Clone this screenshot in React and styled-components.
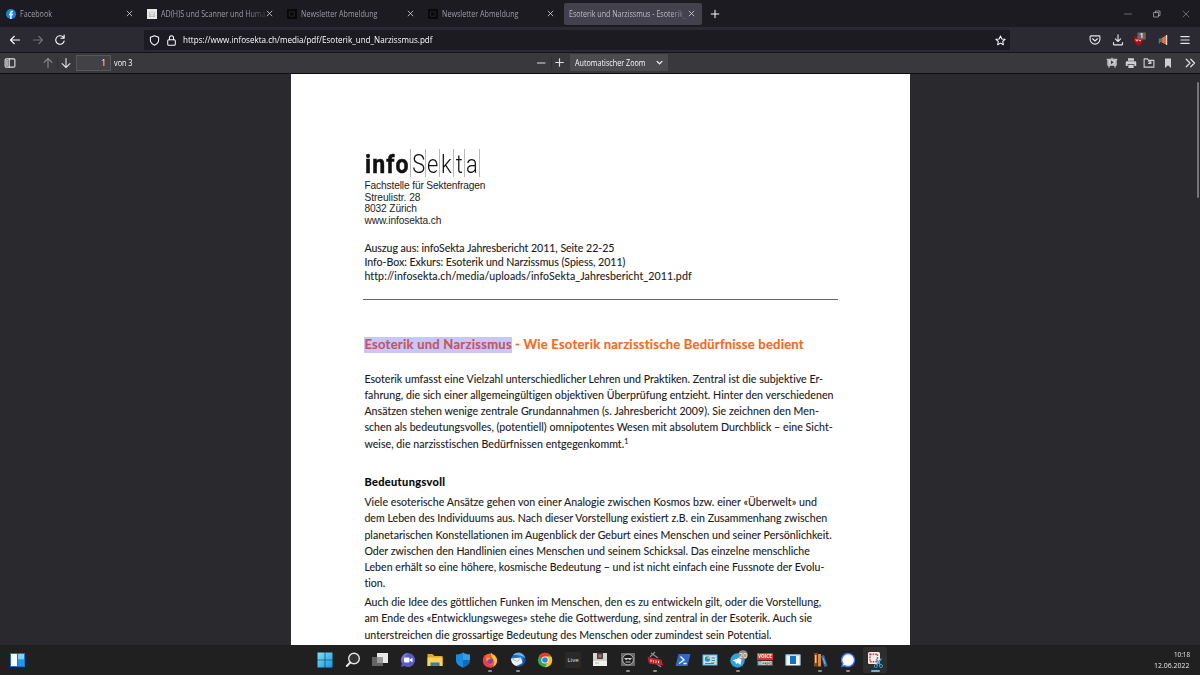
import React, { useLayoutEffect, useRef, useState } from "react";
import styled, { createGlobalStyle, css } from "styled-components";

const Global = createGlobalStyle`
  * { box-sizing: border-box; }
  html, body { margin: 0; padding: 0; overflow: hidden; background: #2a2a2e; }
`;

const ui = `"Open Sans", "Noto Sans", sans-serif`;

/* Text run that takes exactly the given width, as a PDF text layer does:
   tracked by default, or with its glyphs condensed. */
const Run = styled.span`
  display: inline-block;
  white-space: nowrap;
  transform-origin: 0 50%;
`;

function Fit({ w, condense, children }) {
  const ref = useRef(null);
  const [style, setStyle] = useState({});
  useLayoutEffect(() => {
    const natural = ref.current.getBoundingClientRect().width;
    setStyle(
      condense
        ? { transform: `scaleX(${w / natural})`, marginRight: `${w - natural}px` }
        : { letterSpacing: `${(w - natural) / String(children).length}px` }
    );
  }, []);
  return (
    <Run ref={ref} style={style}>
      {children}
    </Run>
  );
}

const Screen = styled.div`
  width: 1200px;
  height: 675px;
  display: flex;
  flex-direction: column;
  overflow: hidden;
  font-family: ${ui};
  color: #fbfbfe;
`;

/* ---------- browser chrome ---------- */

const TabBar = styled.div`
  flex: none;
  height: 27px;
  display: flex;
  align-items: center;
  background: #1c1b22;
`;

const Tab = styled.div`
  width: ${(p) => (p.$active ? 138 : 140.6)}px;
  height: 22px;
  margin-left: ${(p) => (p.$active ? 1.3 : 0)}px;
  padding: 0 ${(p) => (p.$active ? 7 : 8)}px 0 ${(p) => (p.$active ? 5 : 6)}px;
  display: flex;
  align-items: center;
  gap: 1px;
  border-radius: 2px;
  background: ${(p) => (p.$active ? "#42414d" : "transparent")};
  color: ${(p) => (p.$active ? "#bdbcc4" : "#9d9ca3")};
  font-size: 8.3px;
  line-height: 12px;
  svg {
    flex: none;
  }
`;

const TabTitle = styled.div`
  flex: 1;
  min-width: 0;
  padding-left: ${(p) => (p.$flush ? 0 : 3.3)}px;
  white-space: nowrap;
  ${(p) =>
    p.$fade &&
    css`
      mask-image: linear-gradient(to right, #000 calc(100% - 18px), rgba(0, 0, 0, 0.2));
    `}
`;

const NewTab = styled.div`
  margin-left: 8px;
  display: flex;
`;

const WindowButtons = styled.div`
  margin-left: auto;
  padding-right: 10px;
  display: flex;
  gap: 21px;
`;

const NavBar = styled.div`
  flex: none;
  height: 26px;
  display: flex;
  align-items: center;
  background: #2b2a33;
  border-bottom: 1px solid #131318;
`;

const NavButtons = styled.div`
  width: 144px;
  padding-left: 9px;
  display: flex;
  gap: 10.5px;
`;

const UrlBar = styled.div`
  width: 866px;
  height: 20px;
  padding: 1px 4px 0 5px;
  display: flex;
  align-items: center;
  gap: 6px;
  border-radius: 2px;
  background: #1c1b22;
  font-size: 8.8px;
  line-height: 14px;
`;

const Push = styled.div`
  margin-left: auto;
  display: flex;
`;

const Extensions = styled.div`
  margin-left: auto;
  padding-right: 9px;
  display: flex;
  align-items: center;
  gap: 10.5px;
`;

const PdfBar = styled.div`
  flex: none;
  height: 20.5px;
  display: flex;
  align-items: center;
  background: #38383d;
  border-bottom: 1px solid #0c0c0d;
  font-size: 8.1px;
`;

const PdfLeft = styled.div`
  width: 534px;
  padding-left: 4px;
  display: flex;
  align-items: center;
`;

const Spacer = styled.div`
  width: ${(p) => p.$w}px;
`;

const Separator = styled.div`
  width: 1px;
  height: 12px;
  margin: 0 2.5px;
  background: #2f2f34;
`;

const PageInput = styled.div`
  width: 35px;
  height: 16px;
  margin: 0 3px 0 4px;
  padding-right: 4px;
  border: 1px solid #56565c;
  background: #414146;
  text-align: right;
  line-height: 14px;
`;

const ZoomSelect = styled.div`
  width: 98px;
  height: 17px;
  margin-left: 5px;
  padding: 0 5px;
  display: flex;
  align-items: center;
  justify-content: space-between;
  background: #4a4a4f;
`;

const PdfRight = styled.div`
  margin-left: auto;
  padding-right: 4px;
  display: flex;
  align-items: center;
  gap: 6.7px;
`;

const Bookmark = styled.div`
  display: flex;
  margin-right: 3.3px;
`;

/* ---------- document ---------- */

const Viewer = styled.div`
  flex: 1;
  min-height: 0;
  display: flex;
  overflow: hidden;
  background: #2a2a2e;
`;

const Page = styled.div`
  flex: none;
  width: 619.5px;
  margin-left: 290.5px;
  padding: 75.5px 0 0 73.9px;
  background: #fff;
  color: #1a1a1a;
  font-family: Lato, "Open Sans", sans-serif;
`;

const ScrollTrack = styled.div`
  margin-left: auto;
  padding: 8px 1px 0 0;
`;

const ScrollThumb = styled.div`
  width: 2px;
  height: 116px;
  border-radius: 1px;
  background: #75757a;
`;

const Logo = styled.div`
  height: 28px;
  display: flex;
  font-family: Roboto, sans-serif;
  font-size: 26px;
  line-height: 31px;
  color: #111;
`;

const LogoBold = styled.div`
  width: 45.8px;
  padding-left: 0.5px;
  font-weight: 700;
  letter-spacing: 1.2px;
  -webkit-text-stroke: 0.5px #111;
`;

const LogoCell = styled.div`
  width: ${(p) => p.$w}px;
  display: flex;
  justify-content: center;
  border-left: 1px solid #b9b9b9;
  font-weight: 300;
  span {
    transform: scaleX(0.84);
  }
`;

const Address = styled.div`
  margin-top: 3.4px;
  font-family: "Liberation Sans", Arial, sans-serif;
  font-size: 10.2px;
  line-height: 11.5px;
  color: #222;
`;

const Lines = styled.div`
  margin-top: ${(p) => p.$top || 0}px;
  font-size: 10.6px;
  line-height: ${(p) => p.$lh || 16.1}px;
  -webkit-text-stroke: 0.1px #1a1a1a;
`;

const Line = styled.div`
  height: 1lh;
  white-space: nowrap;
`;

const Rule = styled.div`
  width: 475px;
  height: 1px;
  margin: 15.4px 0 0 -1.4px;
  background: #666;
`;

const Title = styled.div`
  margin-top: 36.7px;
  display: flex;
  gap: 3.2px;
  font-size: 13px;
  font-weight: 700;
  line-height: 16px;
  color: #f26a1b;
  -webkit-text-stroke: 0.15px currentColor;
  > span > span, > span:last-child {
    position: relative;
    top: -0.7px;
  }
`;

const Selected = styled.span`
  background: #c9c6fb;
  color: #c0585c;
`;

const Heading = styled.div`
  margin-top: 22.5px;
  font-size: 11px;
  font-weight: 700;
  line-height: 16px;
  color: #000;
  -webkit-text-stroke: 0.15px #000;
`;

const Note = styled.sup`
  font-size: 7px;
  line-height: 0;
  vertical-align: 4px;
`;

/* ---------- taskbar ---------- */

const Taskbar = styled.div`
  flex: none;
  height: 30px;
  display: grid;
  grid-template-columns: 311.5px 577.5px 311px;
  align-items: center;
  background: #202020;
`;

const Widgets = styled.div`
  padding-left: 10px;
  display: flex;
`;

const Apps = styled.div`
  display: flex;
`;

const AppCell = styled.div`
  width: ${(p) => (p.$active ? 24 : 27.5)}px;
  height: 26px;
  margin-left: ${(p) => (p.$active ? 1.75 : 0)}px;
  padding-top: 5px;
  display: flex;
  flex-direction: column;
  align-items: center;
  gap: 2px;
  border-radius: 2px;
  background: ${(p) => (p.$active ? "#2e2e2e" : "transparent")};
  svg {
    overflow: visible;
  }
`;

const Indicator = styled.div`
  width: ${(p) => (p.$active ? 9 : 4)}px;
  height: 2px;
  border-radius: 1px;
  background: ${(p) => (p.$active ? "#5cb8ea" : "#8f8f8f")};
`;

const Clock = styled.div`
  padding: 0 10.5px 1px 0;
  display: flex;
  flex-direction: column;
  align-items: flex-end;
  font-size: 7.3px;
  line-height: 10.3px;
  color: #e8e8e8;
`;

/* ---------- icons ---------- */

const Svg = ({ s = 12, v = 16, children, c = "#fbfbfe", sw = 1.5 }) => (
  <svg width={s} height={s} viewBox={`0 0 ${v} ${v}`} fill="none" stroke={c} strokeWidth={sw}
    strokeLinecap="round" strokeLinejoin="round">
    {children}
  </svg>
);

const Close = () => <Svg s={7} c="#d8d8dc" sw={1.8}><path d="M2.500 2.500l11 11M13.500 2.500l-11 11" /></Svg>;

const Favicon = ({ kind }) => {
  if (kind === "fb")
    return (
      <Svg s={10} c="none">
        <circle cx="8" cy="8" r="8" fill="#1684ee" />
        <path fill="#fff" d="M6.700 16V10H4.800V7.600h1.900V6.100c0-2.300 1.100-3.200 2.900-3.200l1.500.1v2h-1c-1 0-1.200.5-1.200 1.300v1.300h2.200L10.700 10H8.900v6z" />
      </Svg>
    );
  if (kind === "crest")
    return (
      <Svg s={10} c="#aaa" sw={1}>
        <path fill="#e9e9e9" stroke="none" d="M0 0h16v16H0z" />
        <path d="M4 12V6l2-2 2 2 2-2 2 2v6M6 8v4M10 8v4M4 12h8" />
      </Svg>
    );
  return (
    <Svg s={10} c="#34333a" sw={1}>
      <path fill="#09090b" stroke="none" d="M0 0h16v16H0z" />
      <path d="M4.500 4.500h7v7h-7z" />
    </Svg>
  );
};

const Tile = ({ children }) => (
  <svg width="16" height="16" viewBox="0 0 16 16">{children}</svg>
);

const glyph = { fontFamily: '"Open Sans", sans-serif', textAnchor: "middle" };

const apps = [
  { art: <><defs><linearGradient id="w" x2="1" y2="1"><stop stopColor="#7de0fb" /><stop offset="1" stopColor="#1197e6" /></linearGradient></defs>
    <path fill="url(#w)" d="M.5.5h7.200v7.200H.5zM8.300.5h7.200v7.200H8.300zM.5 8.300h7.200v7.200H.5zM8.300 8.300h7.200v7.200H8.300z" /></> },
  { art: <g fill="none" stroke="#e6e6e6"><circle cx="9" cy="6.500" r="5.300" strokeWidth="1.400" fill="#333" /><path d="M5.200 10.500L1.800 14" strokeWidth="2" strokeLinecap="round" /></g> },
  { art: <><path fill="#e8e8e8" d="M5 1h11v10H5z" /><path fill="#6b6b6b" d="M0 5h11v9H0z" opacity=".9" /><path fill="#9a9a9a" d="M5 5h6v6H5z" /></> },
  { art: <><path fill="#5b5bc8" d="M8 1a7 7 0 1 1-3.500 13L1 15l.8-3.500A7 7 0 0 1 8 1z" /><path fill="#8a84de" d="M8 1a7 7 0 0 0-6 10z" opacity=".6" /><rect x="4" y="5.500" width="5.500" height="5" rx="1" fill="#fff" /><path fill="#fff" d="M10 7.500l2.500-1.700v4.500L10 8.800z" /></> },
  { art: <><path fill="#e5a51e" d="M.5 2h5l2 2h8v10H.5z" /><path fill="#fdd25a" d="M.5 5.500h15V14H.5z" /><path fill="#1d7fd0" d="M3.500 10.500h9V14h-9z" /><path fill="#9a7b25" d="M6 12.500h4V14H6z" /></> },
  { art: <><path fill="#1b8be0" d="M8 .5c2 1.500 4.500 2 7 2V8c0 4-3 6-7 7.500C4 14 1 12 1 8V2.500c2.500 0 5-.5 7-2z" /><path fill="#0b5ea8" d="M8 8h7c0 4-3 6-7 7.500z" opacity=".7" /><path fill="#51b4f2" d="M8 .5c2 1.500 4.500 2 7 2V8H8z" opacity=".45" /></> },
  { run: 1, art: <><circle cx="8" cy="8.500" r="7" fill="#ff5a2a" /><path fill="#ffc62b" d="M9 .5c1 2 5.500 3 6 7.500.3 4-3 7.500-7 7.500 3-1 5-3.500 4-6.500C11.500 6 8 5 9 .5z" /><path fill="#f0374f" d="M1 7c-1 5 3 8.500 7 8.500 2 0 3.500-1 4.500-2C8 14 4 12 3.500 7L3 3C2 4 1.300 5.500 1 7z" /><circle cx="8" cy="8.800" r="2.900" fill="#7a3ed0" /><path fill="#ffa02b" d="M4 6c2-1 4-.5 5 1-2-.3-3 .5-3 2-1.500-.5-2-1.500-2-3z" /></> },
  { run: 1, art: <><circle cx="8.500" cy="7.500" r="7" fill="#1f6fc4" /><path fill="#67b3ee" d="M3 3c4-4 11-2 12 3-3-2.500-7-3-12-3z" /><path fill="#eef1f6" d="M1 6.500l10-1 1.500 5.500-6 3C3 13 1 10 1 6.500z" /><path fill="none" stroke="#9aa9bd" strokeWidth=".8" d="M1.500 6.800l6 2.700 3.500-4" /><path fill="#164b95" d="M13 5c2 4 0 8-5 9.500 5 0 8-4 7.200-8z" /></> },
  { art: <><circle cx="8" cy="8" r="7.200" fill="#2fa84f" /><path fill="#e23c2e" d="M8 8L1.800 4.300A7.200 7.200 0 0 1 14.300 4.500H8z" /><path fill="#fbc21c" d="M14.300 4.500A7.200 7.200 0 0 1 8 15.200L11 9.500 8 4.500z" /><circle cx="8" cy="8" r="3.600" fill="#fff" /><circle cx="8" cy="8" r="2.800" fill="#3b7de8" /></> },
  { art: <><path fill="#292929" d="M0 0h16v16H0z" /><text x="8" y="10.200" fontSize="6" fill="#e0e0e0" {...glyph}>Live</text></> },
  { art: <><path fill="#d7d5d0" d="M1 1h14v13H1z" /><path fill="#f2f0ec" d="M1 7.500h14V14H1z" /><path fill="#444" d="M5 1h6v6H5z" /><path fill="#b86b62" d="M6.500 2.500h3v3h-3z" /><path stroke="#aaaaa6" strokeWidth=".8" d="M1 8h14M3 11h4" /></> },
  { run: 1, art: <><path fill="#6a6a6a" d="M1 1h14v13H1z" /><circle cx="8" cy="7.500" r="5.400" fill="#1b1b1b" stroke="#b4b4b4" /><path fill="none" stroke="#ccc" strokeWidth="1" d="M4.500 6.500h7M5 6.500c0 1.500 2.500 1.500 2.500 0M8.500 6.500c0 1.500 2.500 1.500 2.500 0M5.500 10h5" /></> },
  { run: 1, art: <><path fill="none" stroke="#8d8d8d" strokeWidth="1.200" d="M4 1l7 5M8 0L3 5M10 12l4 3" /><path fill="#c9202a" d="M.5 5l14 2.700 1.500 5.800L2 11.500z" /><path stroke="#fff" strokeWidth=".9" d="M4 7.500v2.500M6.500 8v2.500M9 8.300v2.500M11.500 8.700v2.500" /></> },
  { art: <><path fill="#2f69c8" d="M3.500 2H15.500L12.500 14H.5z" /><path fill="none" stroke="#fff" strokeWidth="1.300" d="M5.500 4.500L9 8l-5 3.500M8.500 11.500h3" /></> },
  { art: <><path fill="#5ab9e8" d="M.5 2.500h15v11H.5z" /><path fill="#bfe6f8" d="M1.500 3.500h13v9h-13z" /><circle cx="5.500" cy="7" r="2.700" fill="#2b8ccc" /><path fill="#f2b233" d="M5.500 7V4.300A2.700 2.700 0 0 1 8.200 7z" /><path stroke="#2b8ccc" d="M9.500 6H13M9.500 8.500H13M3 11.500h9" /><path stroke="#e8a030" d="M9 10.500h4" /></> },
  { run: 1, art: <><circle cx="7.500" cy="8.500" r="7.200" fill="#2ba3dc" /><path fill="#fff" d="M2.500 8.500L12 4.800 10.500 13 7.500 10.800 6 12.200 5.500 9.800z" /><circle cx="13" cy="3" r="4.800" fill="#8c8c8c" /><text x="13" y="5.600" fontSize="7" fill="#fff" {...glyph}>20</text></> },
  { art: <><path fill="#d9302c" d="M0 1h16v7H0z" /><path fill="#4c5157" d="M0 8.600h16V14H0z" /><text x="8" y="6.300" fontSize="4.700" fontWeight="700" fill="#fff" {...glyph}>VOICE</text><text x="8" y="13" fontSize="4.300" fontWeight="700" fill="#e6e6e6" textLength="14" {...glyph}>MEETER</text></> },
  { art: <><path fill="#f4f6f8" d="M.5 2.500h15v11H.5z" /><path fill="#2b9be0" d="M.5 2.500h1.200v11H.5zM14.300 2.500h1.200v11h-1.200z" opacity=".35" /><path fill="#1172c9" d="M5 4h6v8H5z" /><path stroke="#8bb9dc" d="M1 3h14" /></> },
  { run: 1, art: <><path fill="#8b4a22" d="M2 1h3.500v13.500H2z" /><path fill="#d68b3a" d="M6 2h3v12.500H6z" /><path fill="#e9c58a" d="M3 3h1.500v8H3z" /><path fill="#3b6fb0" d="M9 4l3-1 3.500 11-3 1z" /><path fill="#85b0dd" d="M10.500 6l1-.3 2 6.300-1 .3z" /></> },
  { run: 1, art: <><path fill="#3a76f0" d="M8 .7a7.300 7.300 0 1 1-3.500 13.700L1 15.300l.9-3.600A7.300 7.300 0 0 1 8 .7z" /><path fill="#fff" d="M8 2.200a5.800 5.800 0 1 1-3 10.700l-2 .6.6-2A5.800 5.800 0 0 1 8 2.200z" /></> },
  { run: 1, active: 1, art: <><rect x="1" y="0" width="12" height="12" rx="1.500" fill="#f3f0ee" /><rect x="3" y="2.200" width="7.500" height="7.500" fill="none" stroke="#cf3a32" strokeWidth="1.400" strokeDasharray="1.600 1" /><path fill="none" stroke="#3ba5df" strokeWidth="1.300" d="M9 7l4.500 6M14.500 6.500L9.500 13" /><circle cx="8.800" cy="14" r="1.500" fill="#202020" stroke="#3ba5df" /><circle cx="14" cy="14" r="1.500" fill="#202020" stroke="#3ba5df" /></> },
];

const tabs = [
  { icon: "fb", text: "Facebook", w: 32 },
  { icon: "crest", text: "AD(H)S und Scanner und Huma", w: 104.5, fade: true },
  { icon: "dark", text: "Newsletter Abmeldung", w: 76.5 },
  { icon: "dark", text: "Newsletter Abmeldung", w: 76.5 },
];

const intro = [
  ["Esoterik umfasst eine Vielzahl unterschiedlicher Lehren und Praktiken. Zentral ist die subjektive Er-", 459],
  ["fahrung, die sich einer allgemeingültigen objektiven Überprüfung entzieht. Hinter den verschiedenen", 469.5],
  ["Ansätzen stehen wenige zentrale Grundannahmen (s. Jahresbericht 2009). Sie zeichnen den Men-", 454.5],
  ["schen als bedeutungsvolles, (potentiell) omnipotentes Wesen mit absolutem Durchblick – eine Sicht-", 468.5],
  ["weise, die narzisstischen Bedürfnissen entgegenkommt.", 260, "1"],
];
const meaning = [
  ["Viele esoterische Ansätze gehen von einer Analogie zwischen Kosmos bzw. einer «Überwelt» und", 452.5],
  ["dem Leben des Individuums aus. Nach dieser Vorstellung existiert z.B. ein Zusammenhang zwischen", 463],
  ["planetarischen Konstellationen im Augenblick der Geburt eines Menschen und seiner Persönlichkeit.", 467.5],
  ["Oder zwischen den Handlinien eines Menschen und seinem Schicksal. Das einzelne menschliche", 445.5],
  ["Leben erhält so eine höhere, kosmische Bedeutung – und ist nicht einfach eine Fussnote der Evolu-", 460],
  ["tion.", 21],
];
const divine = [
  ["Auch die Idee des göttlichen Funken im Menschen, den es zu entwickeln gilt, oder die Vorstellung,", 456.5],
  ["am Ende des «Entwicklungsweges» stehe die Gottwerdung, sind zentral in der Esoterik. Auch sie", 447.5],
  ["unterstreichen die grossartige Bedeutung des Menschen oder zumindest sein Potential.", 407.5],
];
const source = [
  ["Auszug aus: infoSekta Jahresbericht 2011, Seite 22-25", 250],
  ["Info-Box: Exkurs: Esoterik und Narzissmus (Spiess, 2011)", 261],
  ["http://infosekta.ch/media/uploads/infoSekta_Jahresbericht_2011.pdf", 327],
];
const address = [
  ["Fachstelle für Sektenfragen", 121],
  ["Streulistr. 28", 56],
  ["8032 Zürich", 52.5],
  ["www.infosekta.ch", 77],
];

const Block = ({ rows }) =>
  rows.map(([text, w, note]) => (
    <Line key={text}>
      <Fit w={w}>{text}</Fit>
      {note && <Note>{note}</Note>}
    </Line>
  ));

export default function App() {
  return (
    <Screen>
      <Global />
      <TabBar>
        {tabs.map((t, i) => (
          <Tab key={i}>
            <Favicon kind={t.icon} />
            <TabTitle $fade={t.fade}><Fit condense w={t.w}>{t.text}</Fit></TabTitle>
            <Close />
          </Tab>
        ))}
        <Tab $active>
          <TabTitle $fade $flush><Fit condense w={117}>Esoterik und Narzissmus - Esoterik_</Fit></TabTitle>
          <Close />
        </Tab>
        <NewTab><Svg s={10} sw={1.6}><path d="M8 2v12M2 8h12" /></Svg></NewTab>
        <WindowButtons>
          <Svg s={8} c="#88878d" sw={1.400}><path d="M1 8h14" /></Svg>
          <Svg s={8} c="#a5a4aa" sw={1.600}><path d="M2 5h9v9H2zM5 5V2h9v9h-3" /></Svg>
          <Svg s={8} c="#88878d" sw={1.400}><path d="M2 2l12 12M14 2L2 14" /></Svg>
        </WindowButtons>
      </TabBar>

      <NavBar>
        <NavButtons>
          <Svg><path d="M14 8H2.500M7 3L2 8l5 5" /></Svg>
          <Svg c="#716f7a"><path d="M2 8h11.500M9 3l5 5-5 5" /></Svg>
          <Svg><path d="M13.500 9.500A5.700 5.700 0 1 1 12.500 4.500M13.500 1.500v4.200H9.300" /></Svg>
        </NavButtons>
        <UrlBar>
          <Svg s={11}><path d="M8 1.200l6 2.200v3.800c0 3.500-2.500 6-6 7.600-3.500-1.600-6-4.100-6-7.600V3.400z" /></Svg>
          <Svg s={11}><rect x="2.500" y="7" width="11" height="7.800" rx="1.500" /><path d="M5 7V4.200a3 3 0 0 1 6 0V7" /></Svg>
          <Fit condense w={249.500}>https://www.infosekta.ch/media/pdf/Esoterik_und_Narzissmus.pdf</Fit>
          <Push><Svg s={11}><path d="M8 1.300l2 4.400 4.700.5-3.500 3.200 1 4.800L8 11.800l-4.200 2.400 1-4.800L1.300 6.200 6 5.700z" /></Svg></Push>
        </UrlBar>
        <Extensions>
          <Svg s={12} c="#e4e4e8"><path d="M2.500 2.500h11a1 1 0 0 1 1 1V7a6.500 6.500 0 0 1-13 0V3.500a1 1 0 0 1 1-1zM4.800 6.300L8 9.300l3.200-3" /></Svg>
          <Svg s={12} c="#e4e4e8"><path d="M8 1v8.500M4.500 6.500L8 10l3.500-3.500M2 11.500v2a1 1 0 0 0 1 1h10a1 1 0 0 0 1-1v-2" /></Svg>
          <svg width="12" height="16" viewBox="0 0 12 16">
            <path fill="#a50d14" d="M4.500 3.500L9 5v3.500c0 2.500-2 4-4.500 5.200C2 12.500 0 11 0 8.500V5z" />
            <path fill="none" stroke="#f2dada" strokeWidth=".9" d="M2 7v1.500q1 1.200 2 0V7m1 1.500q1.500 1.200 2-.8" />
            <path fill="#67676d" d="M3.500.5h8.200v7H3.500z" />
            <text x="7.600" y="6.400" fontSize="6.500" fontWeight="600" fill="#fff" {...glyph}>1</text>
          </svg>
          <svg width="12" height="12" viewBox="0 0 12 12">
            <path fill="#ed6c3a" d="M4.500 4L9 1.500v9L4.500 8.500z" />
            <path fill="#f1d9cf" d="M9 1h1.200v10H9z" />
            <path fill="#3e7fa3" d="M1.800 4.500h2.700V8H3v1.500H1.800z" />
          </svg>
          <Svg s={12} c="#e4e4e8"><path d="M2.500 3.500h11M2.500 8h11M2.500 12.500h11" /></Svg>
        </Extensions>
      </NavBar>

      <PdfBar>
        <PdfLeft>
          <Svg s={12} c="#dedee2"><rect x="1.500" y="2.500" width="13" height="11" rx="1.500" /><path d="M7 2.500v11" /><path fill="#aaa" stroke="none" d="M2.500 4h3.500v8H2.500z" /></Svg>
          <Spacer $w={26} />
          <Svg s={12} c="#8a8a8e"><path d="M8 14V2.200M2.800 7.200L8 2l5.200 5.200" /></Svg>
          <Separator />
          <Svg s={12} c="#dedee2"><path d="M8 2v11.800M2.800 8.800L8 14l5.200-5.200" /></Svg>
          <PageInput>1</PageInput>
          <Fit condense w={18.500}>von 3</Fit>
        </PdfLeft>
        <Svg s={14} c="#dedee2" sw={1.400}><path d="M4 8h8.500" /></Svg>
        <Separator />
        <Svg s={11} c="#dedee2" sw={1.700}><path d="M8 2.500v11M2.500 8h11" /></Svg>
        <ZoomSelect>
          <Fit condense w={70.500}>Automatischer Zoom</Fit>
          <Svg s={7} sw={2.800}><path d="M2.500 5.500L8 11l5.500-5.500" /></Svg>
        </ZoomSelect>
        <PdfRight>
          <Svg s={12} c="#cfcfd3"><path d="M1.500 3h13M2.500 3v8h11V3M4 13.500v-2M12 13.500v-2M8 1.500V3" /><path fill="#cfcfd3" stroke="none" d="M3 3.500h10v7H3z" /><path fill="#38383d" stroke="none" d="M6.500 4.500L10.500 7l-4 2.500z" /></Svg>
          <Svg s={12} c="none"><path fill="#cfcfd3" d="M4 1.500h8V5H4zM2.500 5.500h11A1.500 1.500 0 0 1 15 7v5h-2.500V9.500h-9V12H1V7a1.500 1.500 0 0 1 1.500-1.500zM4.500 10.500h7v4h-7z" /></Svg>
          <Svg s={12} c="#cfcfd3"><path d="M1.500 13.500v-11H6l1.500 2h7v9zM10.500 5.500v3h-3M10.500 8.500L7.500 5.500" /></Svg>
          <Bookmark><Svg s={12} c="none"><path fill="#cfcfd3" d="M4 2h8v12.500L8 11l-4 3.500z" /></Svg></Bookmark>
          <Svg s={12} c="#dedee2" sw={1.700}><path d="M3 3l5 5-5 5M9 3l5 5-5 5" /></Svg>
        </PdfRight>
      </PdfBar>

      <Viewer>
        <Page>
          <Logo>
            <LogoBold><Fit condense w={44.500}>info</Fit></LogoBold>
            <LogoCell $w={15.300}><span>S</span></LogoCell>
            <LogoCell $w={13.500}><span>e</span></LogoCell>
            <LogoCell $w={14}><span>k</span></LogoCell>
            <LogoCell $w={11.500}><span>t</span></LogoCell>
            <LogoCell $w={14.700}><span>a</span></LogoCell>
            <LogoCell $w={1} />
          </Logo>
          <Address><Block rows={address} /></Address>
          <Lines $top={14.600} $lh={14.200}><Block rows={source} /></Lines>
          <Rule />
          <Title>
            <Selected><Fit w={147.500}>Esoterik und Narzissmus</Fit></Selected>
            <Fit w={289}>- Wie Esoterik narzisstische Bedürfnisse bedient</Fit>
          </Title>
          <Lines $top={18.500}><Block rows={intro} /></Lines>
          <Heading><Fit w={81}>Bedeutungsvoll</Fit></Heading>
          <Lines $top={4.300}><Block rows={meaning} /></Lines>
          <Lines $top={3.400}><Block rows={divine} /></Lines>
        </Page>
        <ScrollTrack><ScrollThumb /></ScrollTrack>
      </Viewer>

      <Taskbar>
        <Widgets>
          <svg width="15" height="14" viewBox="0 0 15 14">
            <path fill="#1b74c9" d="M0 0h15v14H0z" />
            <path fill="#fff" d="M1 1h6v12H1z" />
            <path fill="#7fd0f7" d="M8 1h6v5.500H8z" />
            <path fill="#1f9ae8" d="M8 7h6v6H8z" />
          </svg>
        </Widgets>
        <Apps>
          {apps.map((a, i) => (
            <AppCell key={i} $active={a.active}>
              <Tile>{a.art}</Tile>
              {a.run && <Indicator $active={a.active} />}
            </AppCell>
          ))}
        </Apps>
        <Clock>
          <Fit condense w={16}>10:18</Fit>
          <Fit condense w={35.500}>12.06.2022</Fit>
        </Clock>
      </Taskbar>
    </Screen>
  );
}
